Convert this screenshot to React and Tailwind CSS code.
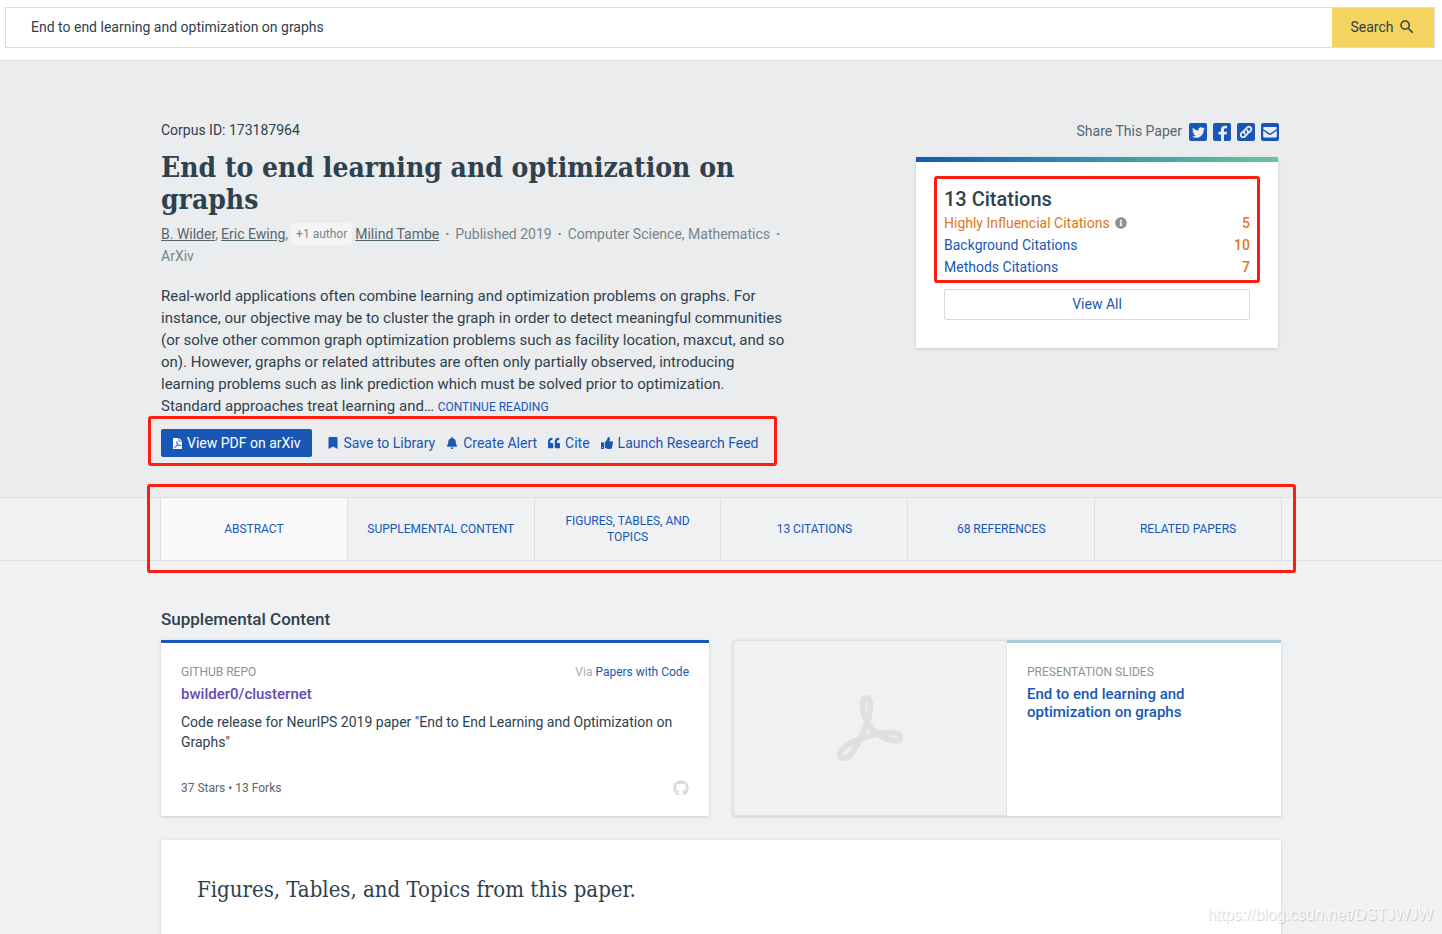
import React from "react";
import { FaTwitter, FaBookmark, FaBell, FaThumbsUp, FaInfoCircle, FaQuoteLeft, FaGithub } from "react-icons/fa";
import { MdSearch } from "react-icons/md";

const RED_BOX = "pointer-events-none absolute rounded-[3px] border-3 border-[#ff1d12]";

const SLAB = "font-['Roboto_Slab','DejaVu_Serif_Condensed','DejaVu_Serif',serif]";

function Acrobat({ className, strokeWidth = 4 }) {
  return (
    <svg viewBox="0 0 66 66" className={className} fill="none" stroke="currentColor" strokeWidth={strokeWidth} strokeLinejoin="round" aria-hidden="true">
      <path d="M29.500 3C25 3 25.200 9 25.800 14C27 24 34 35 44 40.800C51 45.500 63.400 48.500 63.400 42.200C63.400 36.500 50 37 43 38.200C33 40 21 44.500 13 48.500C6 52 1.800 57.500 3 60.800C4.500 64 9.500 64.200 14 59C20 51 28.500 34.500 31.500 23C33.500 15 34.500 3 29.500 3Z" />
    </svg>
  );
}

function PdfFile() {
  return (
    <svg viewBox="0 0 18 22" className="h-[11px] w-[9px]" aria-hidden="true">
      <path fill="currentColor" d="M0 0h11v7h7v15H0zM12.500 0L18 5.500h-5.500z" />
      <path fill="none" stroke="#1857b6" strokeWidth="1.500" d="M8 7c-1.500 3 1 7 6 8.500c2 0 2-1.500 0-1.500c-4 0-8 1.500-11 4c0 2 2 1 3-1c2-3 4-7 2-10z" />
    </svg>
  );
}

function ShareIcon({ label, children }) {
  return (
    <a href="#" aria-label={label} className="flex size-[18px] items-center justify-center rounded-xs bg-[#1857b6] text-[#ebeced]">
      {children}
    </a>
  );
}

function Action({ icon, children }) {
  return (
    <button type="button" className="flex items-center gap-[5px] text-sm leading-5 whitespace-nowrap text-[#1857b6]">
      {icon}
      {children}
    </button>
  );
}

function Author({ children }) {
  return (
    <a href="#" className="text-[#56666f] underline">
      {children}
    </a>
  );
}

const citations = [
  { label: "Highly Influencial Citations", count: 5, info: true },
  { label: "Background Citations", count: 10 },
  { label: "Methods Citations", count: 7 },
];

const tabs = ["Abstract", "Supplemental Content", "Figures, Tables, and Topics", "13 Citations", "68 References", "Related Papers"];

function Header() {
  return (
    <header className="border-b border-[#dddfe0] bg-white pt-[7px] pr-[7px] pb-3 pl-[5px]">
      <form className="flex h-[41px] border border-[#dcdddf]" onSubmit={(e) => e.preventDefault()}>
        <input
          type="text"
          aria-label="Search papers"
          defaultValue="End to end learning and optimization on graphs"
          className="min-w-0 flex-1 pb-0.5 pl-[25px] text-sm outline-none"
        />
        <button type="submit" className="flex w-[102px] items-center justify-center gap-1 bg-[#f4d35e] pb-0.5 text-sm">
          Search
          <MdSearch className="size-[18px]" />
        </button>
      </form>
    </header>
  );
}

function PaperInfo() {
  return (
    <div className="max-w-[650px]">
      <p className="text-sm leading-5">Corpus ID: 173187964</p>
      <h1 className={`mt-3 text-[28px] leading-8 font-bold ${SLAB}`}>End to end learning and optimization on graphs</h1>
      <div className="mt-[7px] flex flex-wrap items-center text-sm leading-[22px] text-[#78848c]">
        <span className="mr-[3px]"><Author>B. Wilder</Author>,</span>
        <span className="mr-[3px]"><Author>Eric Ewing</Author>,</span>
        <button type="button" className="mr-[3px] rounded-[3px] bg-[#f4f4f5] px-[5px] text-xs leading-[22px]">+1 author</button>
        <Author>Milind Tambe</Author>
        <span className="w-4 text-center font-bold">·</span>
        <span>Published 2019</span>
        <span className="w-4 text-center font-bold">·</span>
        <span>Computer Science, Mathematics</span>
        <span className="w-4 text-center font-bold">·</span>
        <span>ArXiv</span>
      </div>
      <p className="mt-[18px] max-w-[626px] text-[15px] leading-[22px]">
        Real-world applications often combine learning and optimization problems on graphs. For instance, our objective
        may be to cluster the graph in order to detect meaningful communities (or solve other common graph optimization
        problems such as facility location, maxcut, and so on). However, graphs or related attributes are often only
        partially observed, introducing learning problems such as link prediction which must be solved prior to
        optimization. Standard approaches treat learning and…{" "}
        <button type="button" className="text-xs leading-4 text-[#1857b6] uppercase">Continue Reading</button>
      </p>
      <div className="relative mt-3 flex items-center">
        <a href="#" className="mr-4 flex h-7 items-center gap-[5px] rounded-xs bg-[#1857b6] px-3 text-sm whitespace-nowrap text-white">
          <PdfFile />
          View PDF on arXiv
        </a>
        <div className="flex gap-[11px]">
          <Action icon={<FaBookmark className="h-3 w-[10px]" />}>Save to Library</Action>
          <Action icon={<FaBell className="size-3" />}>Create Alert</Action>
          <Action icon={<FaQuoteLeft className="size-3" />}>Cite</Action>
          <Action icon={<FaThumbsUp className="size-3" />}>Launch Research Feed</Action>
        </div>
        <div className={`${RED_BOX} -top-[13px] -left-[13px] h-[50px] w-[629px]`} />
      </div>
    </div>
  );
}

function CitationPanel() {
  return (
    <aside className="mr-[3px] w-[362px] shrink-0">
      <div className="-mr-px flex items-center justify-end gap-1.5 pt-0.5 text-sm leading-5 text-[#56666f]">
        <span className="mr-px pb-0.5 leading-[18px]">Share This Paper</span>
        <ShareIcon label="Share on Twitter"><FaTwitter className="size-[13px]" /></ShareIcon>
        <ShareIcon label="Share on Facebook">
          <svg viewBox="0 0 18 18" className="size-[18px]" fill="currentColor" aria-hidden="true">
            <path d="M8 18v-6.500H5.500V8.700H8V6.500C8 4 9.500 2.700 11.800 2.700H14v2.500h-1.400c-1.200 0-1.600.6-1.600 1.500v2H14l-.5 2.800H11V18z" />
          </svg>
        </ShareIcon>
        <ShareIcon label="Copy link">
          <svg viewBox="0 0 18 18" className="size-[18px]" fill="none" stroke="currentColor" strokeWidth="1.800" strokeLinecap="round" aria-hidden="true">
            <path d="M7.800 10.700a2.600 2.600 0 0 1-.2-3.600l2.600-2.600a2.400 2.400 0 0 1 3.400 3.400l-1.500 1.500M10.200 7.300a2.600 2.600 0 0 1 .2 3.600l-2.600 2.600a2.400 2.400 0 0 1-3.400-3.400l1.500-1.500" />
          </svg>
        </ShareIcon>
        <ShareIcon label="Share by email">
          <svg viewBox="0 0 18 18" className="size-[18px]" fill="currentColor" aria-hidden="true">
            <path d="M3.500 4h11c.8 0 1.300.5 1.300 1.200 0 .6-.3 1-.8 1.400L10 10.100c-.6.400-1.400.4-2 0L3 6.600c-.5-.4-.8-.8-.8-1.400C2.200 4.500 2.700 4 3.500 4z" />
            <path d="M2.200 7.600l5 3.600c1.100.8 2.500.8 3.600 0l5-3.600v5.600c0 .8-.5 1.300-1.300 1.300h-11c-.8 0-1.300-.5-1.300-1.300z" />
          </svg>
        </ShareIcon>
      </div>
      <section className="mt-[15px] bg-white shadow-[0_1px_3px_rgba(0,0,0,0.15)]">
        <div className="h-[5px] bg-linear-to-r from-[#1857b6] to-[#67c797]" />
        <div className="px-7 pt-6 pb-7">
          <div className="relative">
            <h2 className="text-xl leading-[26px] font-medium">13 Citations</h2>
            <ul className="text-sm leading-[22px]">
              {citations.map((c) => (
                <li key={c.label} className="flex items-center justify-between">
                  <a href="#" className={c.info ? "flex items-center gap-[5px] text-[#e0761a]" : "text-[#1857b6]"}>
                    {c.label}
                    {c.info && <FaInfoCircle className="size-3 text-[#8c9296]" />}
                  </a>
                  <span className="font-medium text-[#e0761a]">{c.count}</span>
                </li>
              ))}
            </ul>
            <div className={`${RED_BOX} -inset-x-[10px] -top-[10px] h-[107px]`} />
          </div>
          <button type="button" className="mt-[11px] h-[31px] w-full rounded-xs border border-[#d9dadb] pb-0.5 text-sm text-[#1857b6]">
            View All
          </button>
        </div>
      </section>
    </aside>
  );
}

function TabBar() {
  return (
    <nav className="border-y border-[#dddfe1] bg-[#f0f1f3]">
      <div className="relative mx-auto flex w-full max-w-[1122px] border-l border-[#dddfe1]">
        {tabs.map((t, i) => (
          <a
            key={t}
            href="#"
            className={`flex min-h-[62px] flex-1 basis-0 items-center justify-center border-r border-[#dddfe1] px-4 text-center text-xs leading-4 text-[#1857b6] uppercase ${i === 0 ? "bg-[#fafafa]" : ""}`}
          >
            {t}
          </a>
        ))}
        <div className={`${RED_BOX} -inset-x-[14px] -top-[14px] h-[89px]`} />
      </div>
    </nav>
  );
}

const CARD = "bg-white shadow-[0_1px_3px_rgba(0,0,0,0.15)]";

function Supplemental() {
  return (
    <section>
      <h2 className="text-[17px] leading-[22px] font-medium">Supplemental Content</h2>
      <div className="mt-[10px] grid grid-cols-2 gap-6">
        <article className={`${CARD} flex min-h-44 flex-col border-t-3 border-[#1857b6] px-5 pt-5 pb-[18px]`}>
          <div className="flex justify-between text-xs leading-[18px]">
            <span className="text-[#8c9296] uppercase">GitHub Repo</span>
            <span className="text-[#a3abb0]">
              Via <a href="#" className="text-[#1857b6]">Papers with Code</a>
            </span>
          </div>
          <h3 className="mt-1 text-[15px] leading-[18px] font-medium">
            <a href="#" className="text-[#6449b5]">bwilder0/clusternet</a>
          </h3>
          <p className="mt-[9px] text-sm leading-5">Code release for NeurIPS 2019 paper "End to End Learning and Optimization on Graphs"</p>
          <div className="mt-auto flex items-center justify-between text-xs leading-5 text-[#56666f]">
            <span>37 Stars • 13 Forks</span>
            <FaGithub className="size-4 text-[#d9dcde]" />
          </div>
        </article>
        <article className={`${CARD} grid min-h-44 grid-cols-2`}>
          <div className="flex items-center justify-center border border-[#dfe0e1] bg-[#f0f1f3]">
            <Acrobat className="size-[66px] text-[#dfe0e1]" strokeWidth={6} />
          </div>
          <div className="border-t-3 border-[#aecbdd] px-5 pt-5">
            <p className="text-xs leading-[18px] text-[#8c9296] uppercase">Presentation Slides</p>
            <h3 className="mt-1 text-[15px] leading-[18px] font-medium">
              <a href="#" className="text-[#1857b6]">End to end learning and optimization on graphs</a>
            </h3>
          </div>
        </article>
      </div>
    </section>
  );
}

export default function App() {
  return (
    <div className="relative flex min-h-screen flex-col bg-[#f0f1f3] font-[Roboto,sans-serif] text-[#2e414f]">
      <Header />
      <div className="bg-[#ebeced] pt-[59px] pb-10">
        <div className="mx-auto flex w-full max-w-[1120px] items-start justify-between">
          <PaperInfo />
          <CitationPanel />
        </div>
      </div>
      <TabBar />
      <main className="mx-auto flex w-full max-w-[1120px] flex-1 flex-col gap-6 pt-[47px]">
        <Supplemental />
        <section className={`${CARD} flex-1 px-9 pt-[35px]`}>
          <h2 className={`text-[22px] leading-[30px] ${SLAB}`}>Figures, Tables, and Topics from this paper.</h2>
        </section>
      </main>
      <p className="absolute right-[9px] bottom-[9px] font-['Liberation_Sans',sans-serif] text-base leading-5 text-white/80 [text-shadow:1px_1px_1px_rgba(0,0,0,0.18)]">
        https://blog.csdn.net/DSTJWJW
      </p>
    </div>
  );
}
